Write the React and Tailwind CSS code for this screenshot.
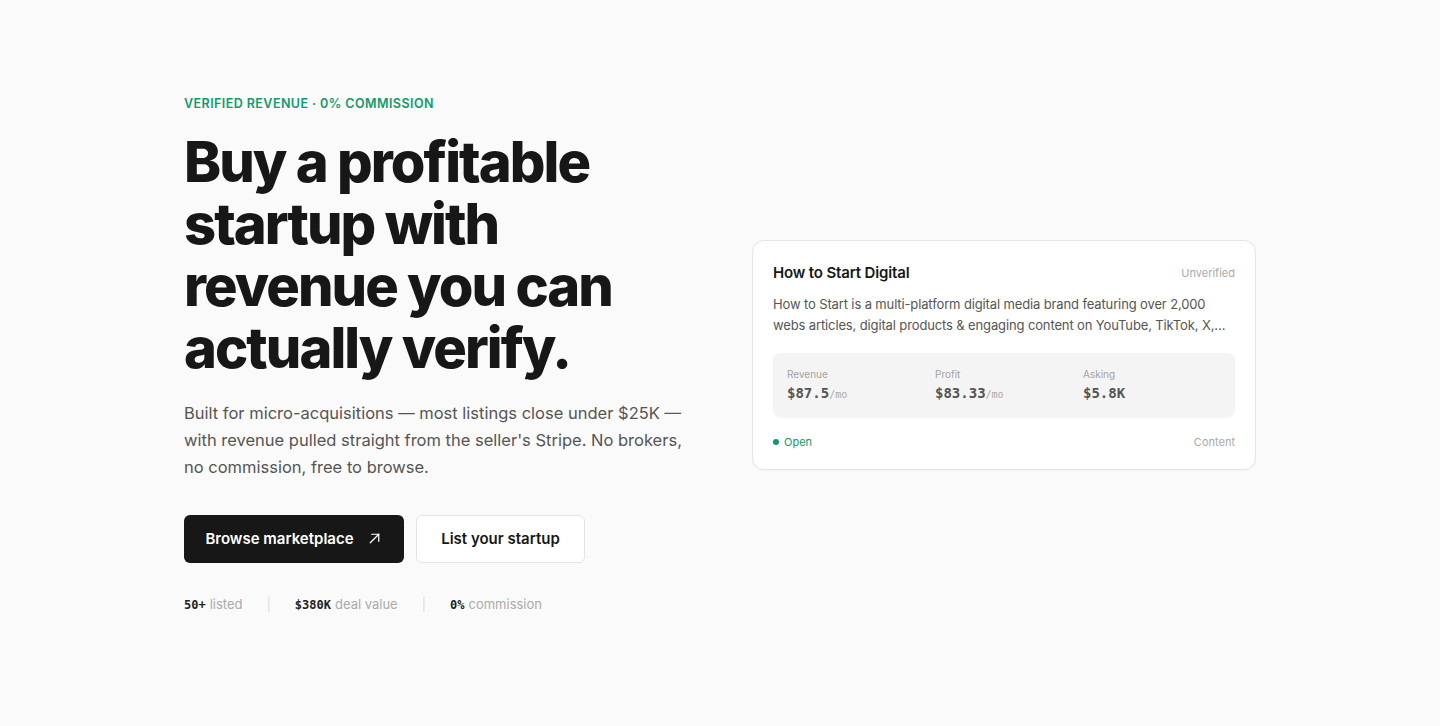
import React from "react";

const sans = { fontFamily: "Inter, 'Noto Sans', sans-serif" };

function Stat({ label, value, unit }) {
  return (
    <div className="flex flex-col gap-[3px]">
      <span className="text-[10px] leading-[14px] text-[#a3a3a3]">{label}</span>
      <span className="font-['DejaVu_Sans_Mono',monospace] text-[14px] font-bold leading-[18px] text-[#555]">
        {value}
        {unit && <span className="text-[10px] font-normal text-[#aaa]">{unit}</span>}
      </span>
    </div>
  );
}

export default function App() {
  return (
    <div className="min-h-screen bg-[#fafafa] text-[#171717]" style={sans}>
      <div className="mx-auto grid max-w-[1072px] grid-cols-2 items-center gap-16 pt-[95px] pb-[100px]">
        <div>
          <p className="text-[12.5px] font-semibold uppercase tracking-[0.035em] text-[#109a6c]">
            Verified revenue · 0% commission
          </p>
          <h1 className="mt-[17px] text-[56px] font-extrabold leading-[62px] tracking-[-0.035em] text-[#171717]">
            Buy a profitable startup with revenue you can actually verify.
          </h1>
          <p className="mt-[21px] max-w-[505px] text-[16.5px] leading-[27px] text-[#555]">
            Built for micro-acquisitions — most listings close under $25K — with revenue pulled
            straight from the seller's Stripe. No brokers, no commission, free to browse.
          </p>
          <div className="mt-[34px] flex gap-3">
            <button className="flex h-12 w-[220px] items-center justify-center gap-3 rounded-md bg-[#171717] text-[15px] font-semibold text-white">
              Browse marketplace
              <svg width="17" height="17" viewBox="0 0 24 24" fill="none" stroke="currentColor" strokeWidth="1.75" strokeLinecap="round" strokeLinejoin="round">
                <path d="M6 18 18 6" />
                <path d="M8 6h10v10" />
              </svg>
            </button>
            <button className="flex h-12 w-[169px] items-center justify-center rounded-md border border-[#e3e3e3] bg-white text-[15px] font-semibold text-[#171717]">
              List your startup
            </button>
          </div>
          <div className="mt-[32px] flex items-center text-[13px]">
            <span>
              <span className="font-['DejaVu_Sans_Mono',monospace] text-[12px] font-bold text-[#222]">50+</span>
              <span className="ml-1 text-[#aaa]">listed</span>
            </span>
            <span className="mx-[24px] text-[#ddd]">|</span>
            <span>
              <span className="font-['DejaVu_Sans_Mono',monospace] text-[12px] font-bold text-[#222]">$380K</span>
              <span className="ml-1 text-[#aaa]">deal value</span>
            </span>
            <span className="mx-[24px] text-[#ddd]">|</span>
            <span>
              <span className="font-['DejaVu_Sans_Mono',monospace] text-[12px] font-bold text-[#222]">0%</span>
              <span className="ml-1 text-[#aaa]">commission</span>
            </span>
          </div>
        </div>

        <div className="rounded-xl border border-[#e5e5e5] bg-white px-5 pt-[21px] pb-[18px] shadow-[0_1px_2px_rgba(0,0,0,0.04)]">
          <div className="flex items-center justify-between">
            <h3 className="text-[15px] font-semibold tracking-[-0.01em] text-[#171717]">How to Start Digital</h3>
            <span className="text-[11px] text-[#aaa]">Unverified</span>
          </div>
          <p className="mt-[10px] text-[13px] leading-[21px] tracking-[-0.01em] text-[#555]">
            How to Start is a multi-platform digital media brand featuring over 2,000 webs articles,
            digital products &amp; engaging content on YouTube, TikTok, X,…
          </p>
          <div className="mt-[17px] grid grid-cols-3 rounded-lg bg-[#f4f4f4] py-[14px] pr-[4px] pl-[14px]">
            <Stat label="Revenue" value="$87.5" unit="/mo" />
            <Stat label="Profit" value="$83.33" unit="/mo" />
            <Stat label="Asking" value="$5.8K" />
          </div>
          <div className="mt-[16px] flex items-center justify-between text-[11px]">
            <span className="flex items-center gap-[5px] text-[#109a6c]">
              <span className="h-[6px] w-[6px] rounded-full bg-[#109a6c]" />
              Open
            </span>
            <span className="text-[#aaa]">Content</span>
          </div>
        </div>
      </div>
    </div>
  );
}
